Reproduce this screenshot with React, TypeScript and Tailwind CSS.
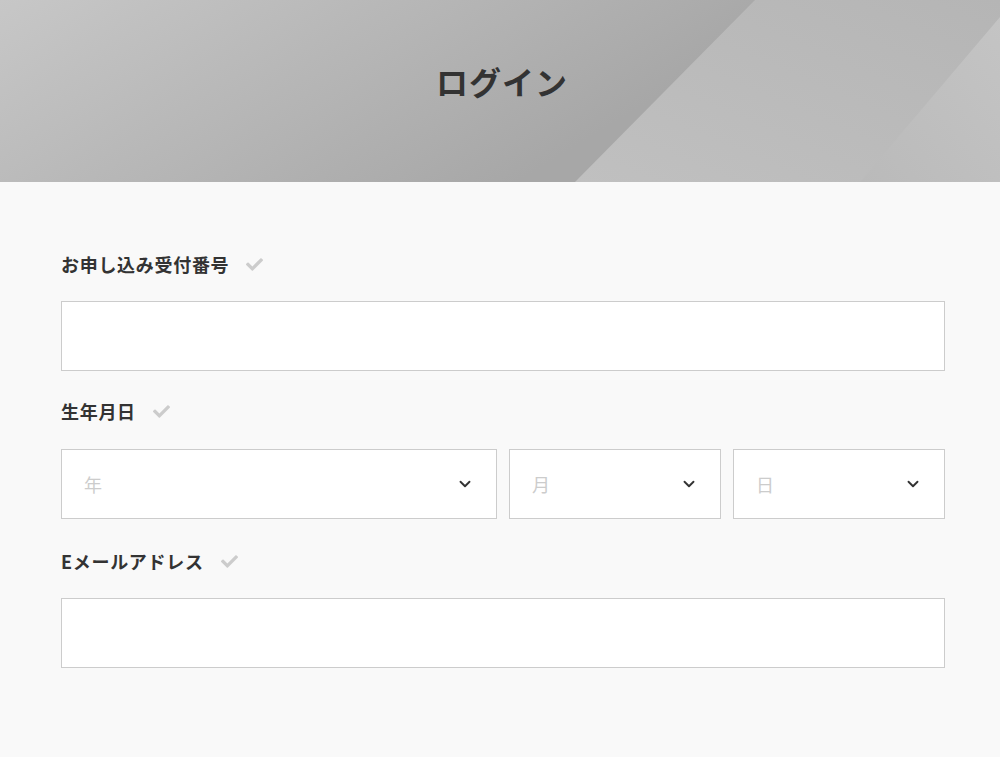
import { ChevronDown } from 'lucide-react';
import { FaCheck } from 'react-icons/fa';

const font = { fontFamily: '"Noto Sans CJK JP", "Noto Sans", sans-serif' };

const HeaderBg = () => (
  <svg className="absolute inset-0 w-full h-full" viewBox="0 0 1000 182" preserveAspectRatio="none">
    <defs>
      <linearGradient id="g1" x1="0" y1="0" x2="1" y2="0.3">
        <stop offset="0" stopColor="#c7c7c7" />
        <stop offset="0.75" stopColor="#a7a7a7" />
      </linearGradient>
      <linearGradient id="g2" x1="0" y1="1" x2="1" y2="0">
        <stop offset="0" stopColor="#c0c0c0" />
        <stop offset="1" stopColor="#b5b5b5" />
      </linearGradient>
      <linearGradient id="g3" x1="0" y1="1" x2="1" y2="0">
        <stop offset="0" stopColor="#bababa" />
        <stop offset="1" stopColor="#c4c4c4" />
      </linearGradient>
    </defs>
    <rect x="0" y="0" width="1000" height="182" fill="url(#g1)" />
    <polygon points="755,0 1000,0 1000,182 575,182" fill="url(#g2)" />
    <polygon points="1000,17 1000,182 860,182" fill="url(#g3)" />
  </svg>
);

const Label = ({ text, className = 'mb-[25px]' }: { text: string; className?: string }) => (
  <div className={`flex items-center gap-[17px] h-6 ${className}`}>
    <span className="text-[18px] font-bold text-[#333] leading-6 tracking-[0.7px]">{text}</span>
    <FaCheck className="text-[#cccccc] w-[17px] h-[17px]" />
  </div>
);

const Select = ({ placeholder, className }: { placeholder: string; className: string }) => (
  <div className={`flex items-center justify-between h-[70px] bg-white border border-[#cccccc] pl-[22px] pr-[22px] ${className}`}>
    <span className="text-[18px] text-[#cccccc]">{placeholder}</span>
    <ChevronDown className="w-[18px] h-[18px] text-[#333]" strokeWidth={2.5} />
  </div>
);

export default function App() {
  return (
    <div className="min-h-[757px] bg-[#f9f9f9]" style={font}>
      {/* Page header */}
      <div className="relative h-[182px] flex items-center justify-center overflow-hidden">
        <HeaderBg />
        <h1 className="relative text-[32px] font-bold text-[#333] tracking-[1px] pl-1 -mt-[21px]">ログイン</h1>
      </div>

      {/* Form */}
      <div className="ml-[61px] w-[884px] pt-[70px]">
        <Label text="お申し込み受付番号" />
        <input className="block w-full h-[70px] bg-white border border-[#cccccc] mb-[28px] outline-none" />

        <Label text="生年月日" className="mb-[26px]" />
        <div className="flex gap-3 mb-[30px]">
          <Select placeholder="年" className="w-[436px]" />
          <Select placeholder="月" className="w-[212px]" />
          <Select placeholder="日" className="w-[212px]" />
        </div>

        <Label text="Eメールアドレス" />
        <input className="block w-full h-[70px] bg-white border border-[#cccccc] outline-none" />
      </div>
    </div>
  );
}
